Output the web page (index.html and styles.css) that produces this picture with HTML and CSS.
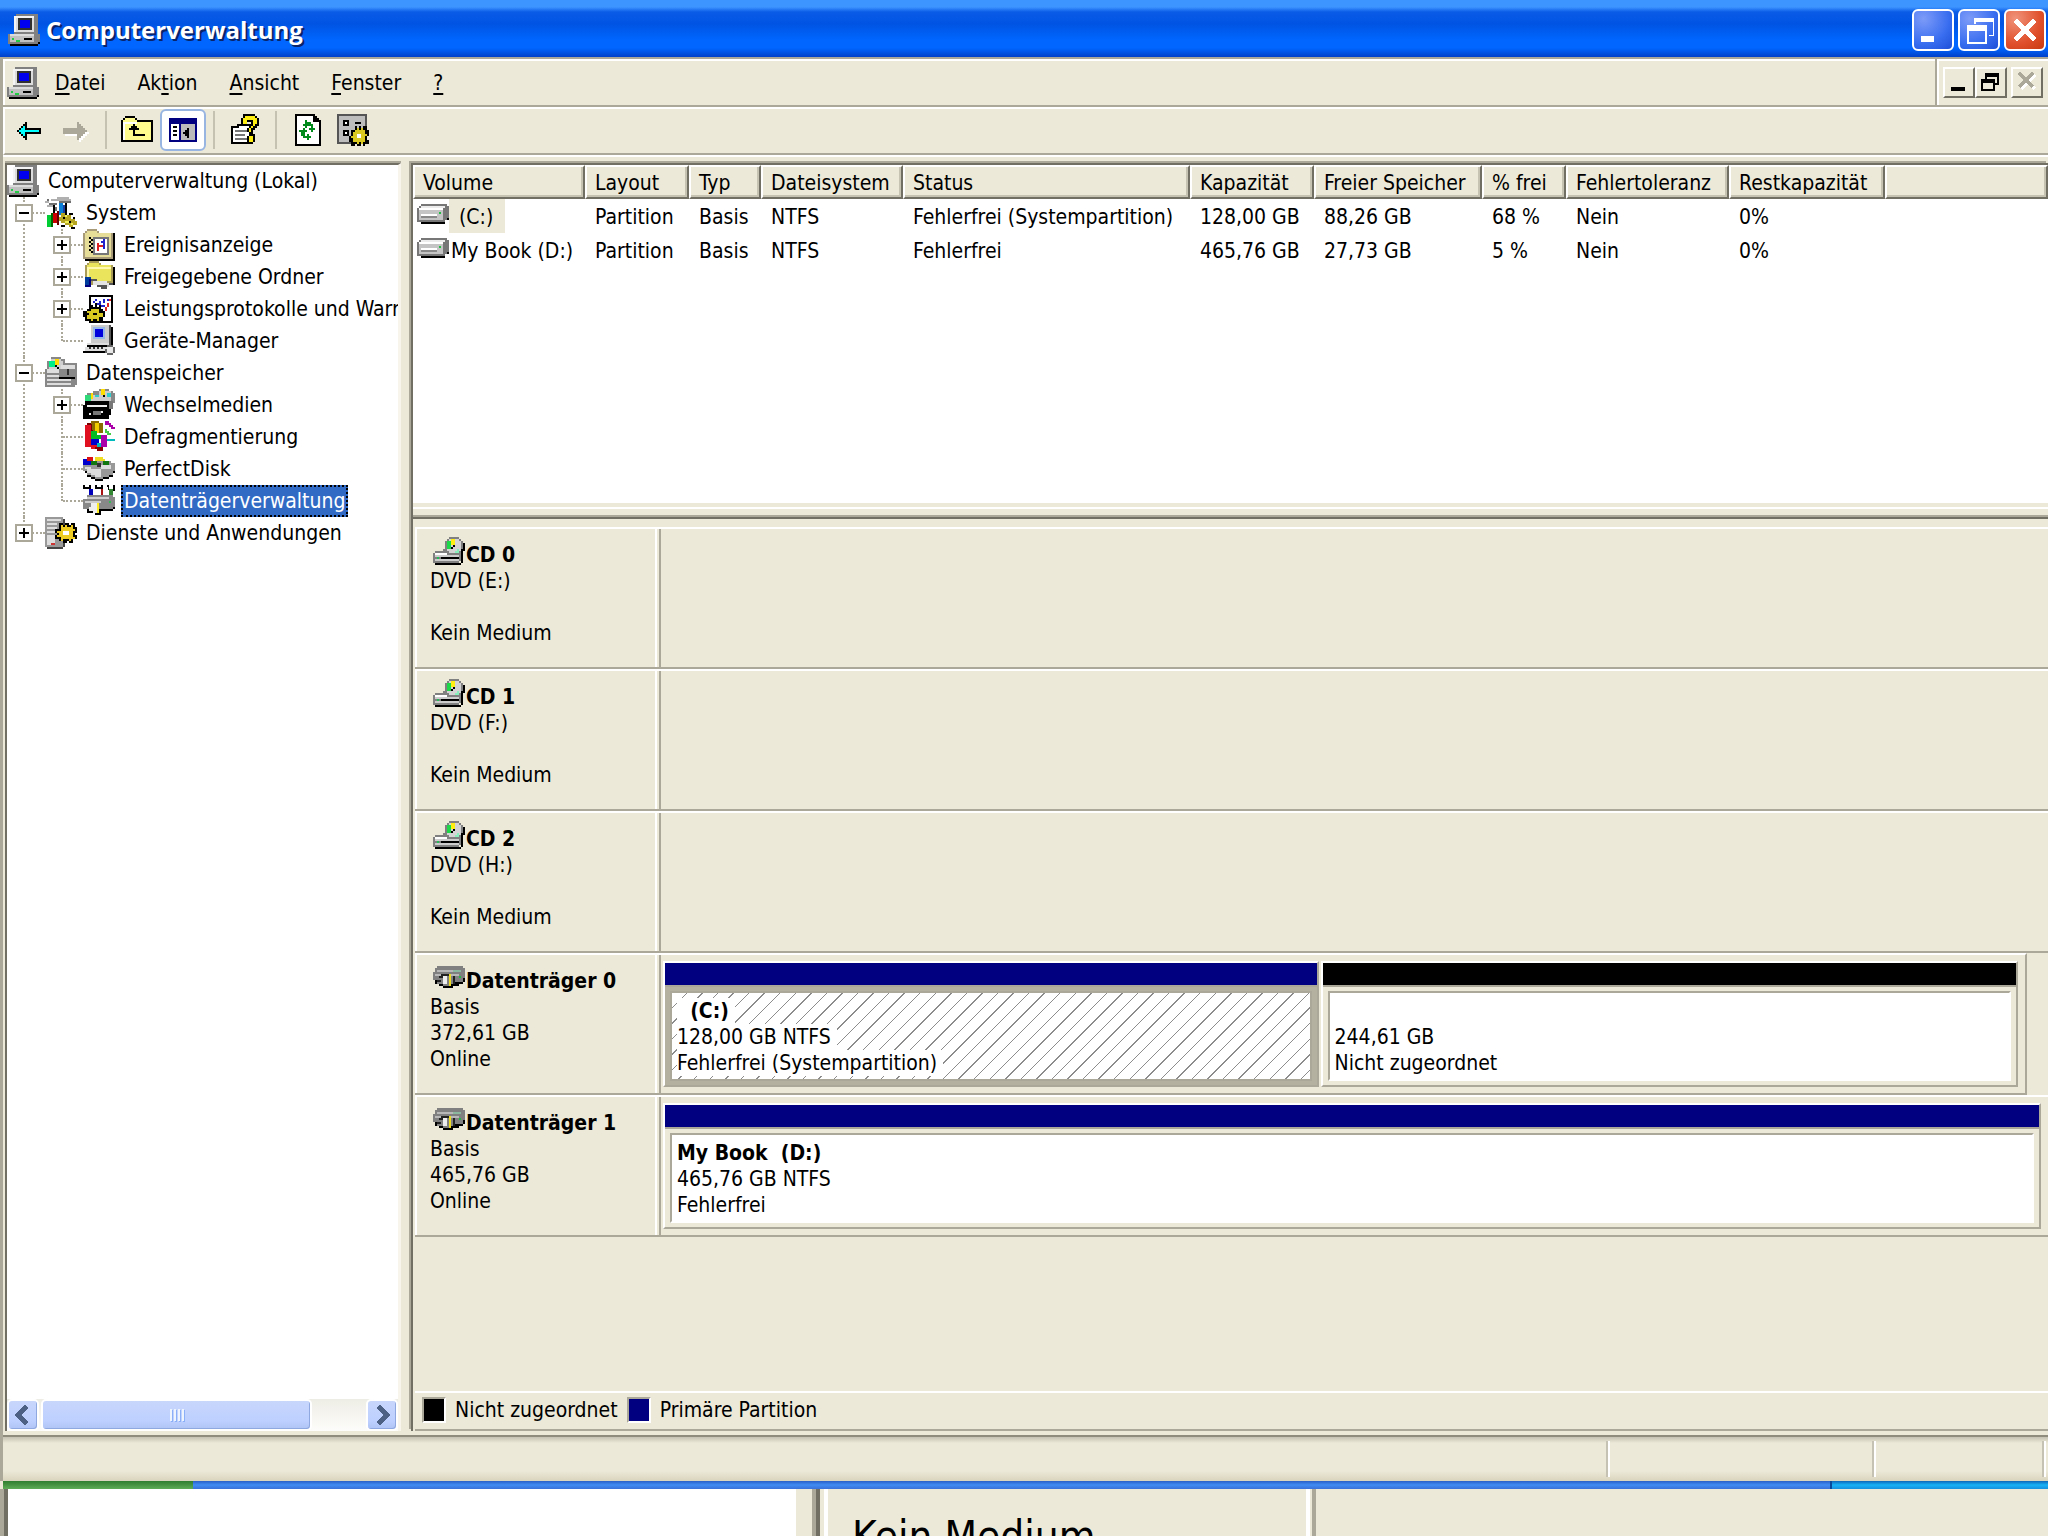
FILE: index.html
```
<!DOCTYPE html>
<html lang="de">
<head>
  <meta charset="UTF-8" />
  <meta name="viewport" content="width=device-width, initial-scale=1.0" />
  <title>Computerverwaltung</title>
  <link rel="stylesheet" href="styles.css">
</head>
<body>
  <!-- Icon sprite, every icon sits on a 16x16 grid -->
  <svg class="sprite" aria-hidden="true">
    <symbol id="computer" viewBox="0 0 16 16">
      <path fill="#000" d="M14 2h1v8h1v5h-1v1H1v-1h13z"/>
      <path fill="#808080" d="M4 0h11v10h1v4h-1v1H0v-5h3V1h1z"/>
      <path fill="#dcdcdc" d="M4 1h9v8H4zM1 10h12v1H1z"/>
      <path fill="#f4f4f4" d="M4 1h9v1H4zM3 1h1v8H3z"/>
      <path fill="#c0c0c0" d="M1 11h12v3H1z"/>
      <path fill="#303030" d="M5 2h7v6H5z"/>
      <path fill="#00e" d="M6 3h5v4H6z"/>
      <path fill="#000" d="M8 12h4v1H8z"/>
      <path fill="#2c4" d="M2 12h1v1H2zM4 13h2v1H4z"/>
    </symbol>
    <symbol id="plus" viewBox="0 0 9 9"><path d="M2 4h5v1H2zM4 2h1v5H4z"/></symbol>
    <symbol id="minus" viewBox="0 0 9 9"><path d="M2 4h5v1H2z"/></symbol>
    <symbol id="tools" viewBox="0 0 16 16">
      <path fill="#b0b0b0" d="M0 2h2v1H0zM3 1h2v1H3zM1 4h3v1H1zM6 0h6v1h1v2H7V2H5V1h1z"/>
      <path fill="#707070" d="M1 1h1v1H1zM2 3h4v1H2zM4 5h2v2H4zM7 2h6v1H7z"/>
      <path fill="#000" d="M4 4h1v5H4zM10 3h1v6h-1zM12 8h2v1h-2z"/>
      <path fill="#0a7fd8" d="M7 3h2v6H7z"/>
      <path fill="#1d3fa0" d="M9 4h1v5H9z"/>
      <path fill="#0c3" d="M1 9h2v6H1z"/>
      <path fill="#060" d="M3 8h1v7H3z"/>
      <path fill="#c00" d="M4 8h3v5H4z"/>
      <path fill="#600" d="M6 7h1v7H6z"/>
      <path fill="#b5a520" d="M8 8h2v1h3v2h2v1h1v2h-2v1h-2v-1h-2v-1H8v-1H7v-2h1z"/>
      <path fill="#000" d="M9 10h1v1H9zM12 12h1v1h-1zM8 14h2v1H8zM13 15h2v1h-2zM14 10h1v1h-1z"/>
      <path fill="#ee5" d="M10 9h1v1h-1zM10 12h2v1h-2zM13 13h1v1h-1z"/>
    </symbol>
    <symbol id="events" viewBox="0 0 16 16">
      <path fill="#000" d="M15 2h1v14H1v-1h14z"/>
      <path fill="#a89c78" d="M1 1h1V0h5v1h1v1h7v13H0V2h1z"/>
      <path fill="#e6de98" d="M2 1h5v1H2zM1 2h13v12H1z"/>
      <path fill="#000" d="M3 4h1v1H3zM4 5h1v1H4zM3 6h1v1H3zM4 7h1v1H4zM3 8h1v1H3zM4 9h1v1H4zM3 10h1v1H3zM4 11h1v1H4z"/>
      <path fill="#777" d="M5 4h8v9H5z"/>
      <path fill="#fff" d="M6 5h6v7H6z"/>
      <path fill="#d22" d="M7 7h1v4H7zM8 8h2v1H8z"/>
      <path fill="#22c" d="M10 5h1v5h-1zM9 6h1v1H9z"/>
    </symbol>
    <symbol id="shared" viewBox="0 0 16 16">
      <path fill="#000" d="M15 3h1v9h-1z"/>
      <path fill="#a89c58" d="M2 1h1V0h5v1h1v1h6v10H1V2h1z"/>
      <path fill="#eae45c" d="M3 1h5v1H3zM2 2h12v8H2z"/>
      <path fill="#fff9b0" d="M2 3h12v1H2zM2 3h1v7H2z"/>
      <path fill="#003c9c" d="M1 8h3v5H1z"/>
      <path fill="#000080" d="M1 12h3v1H1zM3 9h1v4H3z"/>
      <path fill="#e4e4e4" d="M5 10h7v1h3v1h-2v1H8v-1H5z"/>
      <path fill="#555" d="M4 9h3v1H4zM7 12h5v1H7zM9 13h3v1H9zM13 11h2v1h-2z"/>
    </symbol>
    <symbol id="perf" viewBox="0 0 16 16">
      <path fill="#000" d="M3 1h12v14H3z"/>
      <path fill="#fff" d="M4 2h10v12H4z"/>
      <path fill="#22c" d="M5 4h1v1H5zM6 3h1v1H6zM7 5h1v1H7zM8 4h1v2H8zM10 3h1v2h-1zM12 3h1v1h-1zM9 6h2v1H9z"/>
      <path fill="#d22" d="M13 3h1v1h-1zM12 5h1v2h-1zM11 7h1v2h-1zM10 9h1v1h-1z"/>
      <path fill="#000" d="M4 6h1v1h1V5h1v2h1V6h1v2h1v1h1v3h-1v2H9v1H7v-1H5v1H3v-1H1v-2H0V9h2V8h2z"/>
      <path fill="#d8c820" d="M4 8h4v2h2v2H8v2H7v-1H5v1H4v-1H2v-2h1v-1H2V9h2z"/>
      <path fill="#000" d="M5 10h2v1H5z"/>
    </symbol>
    <symbol id="device" viewBox="0 0 16 16">
      <path fill="#555" d="M4 0h10v10H4z"/>
      <path fill="#000" d="M14 1h1v9h-1zM0 13h12v1H0zM2 10h11v1H2z"/>
      <path fill="#ccc" d="M4 0h9v9H4z"/>
      <path fill="#98b8e8" d="M5 1h6v6H5z"/>
      <path fill="#00d" d="M6 2h4v4H6z"/>
      <path fill="#ddd" d="M2 9h11v1H2zM1 11h11v2H1z"/>
      <path fill="#333" d="M3 11h1v1H3zM5 11h1v1H5zM7 11h1v1H7zM9 11h1v1H9z"/>
      <path fill="#666" d="M12 10h3v1h1v3h-1v1h-3v-1h-1v-2h1z"/>
      <path fill="#e8e8e8" d="M12 11h3v3h-3z"/>
    </symbol>
    <symbol id="storage" viewBox="0 0 16 16">
      <path fill="#000" d="M2 15h13v-1h1V4h-1z"/>
      <path fill="#888" d="M3 0h5v1h2v2h6v11h-1v1H0V6h1V2h2z"/>
      <path fill="#cfcfcf" d="M3 1h5v1h1v4H2V2h1z"/>
      <path fill="#0e8" d="M2 2h3v3H2z"/>
      <path fill="#fd0" d="M5 1h2v3H5z"/>
      <path fill="#000" d="M5 4h1v1H5zM6 5h1v1H6zM7 10h8v1H7z"/>
      <path fill="#ddd" d="M1 6h6v2H1zM8 4h7v2H8zM1 9h6v1H1zM1 11h12v1H1zM1 13h12v1H1z"/>
      <path fill="#333" d="M11 6h1v3h-1z"/>
    </symbol>
    <symbol id="removable" viewBox="0 0 16 16">
      <path fill="#888" d="M2 2h3V1h3V0h5v1h2v1h1v5h-2v2H1V3h1z"/>
      <path fill="#ccc" d="M3 3h5v3H3zM8 1h6v5H8z"/>
      <path fill="#2fd97a" d="M1 3h3v4H1z"/>
      <path fill="#fd0" d="M4 2h1v3H4zM9 0h2v3H9z"/>
      <path fill="#3cc" d="M6 3h2v1H6zM12 2h2v2h-2z"/>
      <path fill="#000" d="M1 6h13v7h-1v2H0V8h1zM10 3h1v1h-1z"/>
      <path fill="#eee" d="M2 8h10v1H2zM3 12h1v1H3zM9 11h1v1H9z"/>
      <path fill="#777" d="M5 11h4v2H5zM13 6h2v4h-2z"/>
    </symbol>
    <symbol id="defrag" viewBox="0 0 16 16">
      <path fill="#700" d="M2 1h3v12h3v1H4v-1H1V2h1z"/>
      <path fill="#e01020" d="M1 2h3v10h3v2H4v-1H1z"/>
      <path fill="#886a00" d="M4 0h4v1h2v5H5z"/>
      <path fill="#ec0" d="M6 1h2v5H6z"/>
      <path fill="#0b2" d="M4 5h3v2h2v2H4z"/>
      <path fill="#00c" d="M4 9h4v3H4z"/>
      <path fill="#a0a" d="M9 7h3v6H9zM11 0h2v1h1v1h1v1h1v1h-2V3h-1V2h-2z"/>
      <path fill="#4c4" d="M11 4h1v1h1v1h1v1h-2V6h-1z"/>
      <path fill="#0bb" d="M12 9h4v1h-4zM7 11h2v2H7z"/>
      <path fill="#800" d="M6 13h4v1H6zM7 14h3v1H7z"/>
    </symbol>
    <symbol id="perfect" viewBox="0 0 16 16">
      <path fill="#000" d="M1 8h15v2h-1v2h-2v1h-3v1H6v-1H4v-1H2v-2H1z"/>
      <path fill="#999" d="M0 5h2V4h12v1h2v4h-1v2h-2v1h-3v1H6v-1H4v-1H2V9H0z"/>
      <path fill="#ddd" d="M1 7h3v1h5v4H6v-1H4v-1H2V8H1zM9 6h5v2H9z"/>
      <path fill="#00c" d="M0 3h4v3H0z"/>
      <path fill="#d11" d="M2 2h3v2H2z"/>
      <path fill="#171" d="M4 4h3v2H4zM10 4h3v2h-3z"/>
      <path fill="#ed2" d="M6 2h4v1h1v1H6z"/>
      <path fill="#333" d="M7 5h2v2H7z"/>
    </symbol>
    <symbol id="diskmgmt" viewBox="0 0 16 16">
      <path fill="#000" d="M0 0h1v1h2V0h1v2H0zM6 0h1v1h2V0h1v2H6zM12 0h1v2h2V0h1v3h-3z"/>
      <path fill="#00b" d="M3 2h2v4H3z"/>
      <path fill="#a11" d="M9 2h1v4H9z"/>
      <path fill="#383" d="M13 2h2v4h-2z"/>
      <path fill="#000" d="M1 9h15v3h-1v1H9v2H6v-1H2v-2H1z"/>
      <path fill="#888" d="M2 5h13v1h1v5h-1v1H0V7h2z"/>
      <path fill="#ccc" d="M2 6h11v1H2zM1 8h8v1H1z"/>
      <path fill="#eee" d="M4 9h3v5H5v-1H3v-2h1z"/>
      <path fill="#fe2" d="M7 9h1v5H7z"/>
      <path fill="#3b5" d="M13 8h1v1h-1z"/>
    </symbol>
    <symbol id="services" viewBox="0 0 16 16">
      <path fill="#444" d="M9 1h1v14H1v1h8z"/>
      <path fill="#999" d="M0 0h9v15H0z"/>
      <path fill="#ddd" d="M1 1h7v1H1zM1 3h5v1H1zM1 5h5v1H1zM1 7h4v1H1zM1 9h4v5H1z"/>
      <path fill="#c33" d="M3 13h2v1H3z"/>
      <path fill="#000" d="M7 3h2v1h1V3h2v1h1V3h2v2h1v3h-1v1h1v2h-2v2h-2v-1h-1v1H9v-1H7v-1H5V9h1V8H5V6h2z"/>
      <path fill="#ec2" d="M8 4h1v1h1V4h1v1h2V4h1v2h1v1h-1v3h1v1h-2v1h-1v-1H9v1H8v-2H6V9h1V8H6V7h2z"/>
      <path fill="#fff" d="M9 7h3v2H9z"/>
    </symbol>
    <symbol id="drive" viewBox="0 0 16 10">
      <path fill="#000" d="M15 1h1v7h-1v1H2v1h12V9h1z"/>
      <path fill="#777" d="M2 0h13v1h1v6h-1v1h-1v1H0V2h1V1h1z"/>
      <path fill="#ececec" d="M2 1h12v1H2z"/>
      <path fill="#c4c4c4" d="M1 2h12v6H1z"/>
      <path fill="#fff" d="M1 2h12v1H1zM2 5h8v1H2z"/>
      <path fill="#888" d="M2 6h8v1H2z"/>
      <path fill="#2b4" d="M11 4h1v1h-1z"/>
    </symbol>
    <symbol id="cd" viewBox="0 0 16 14">
      <path fill="#000" d="M14 2h1v1h1v4h-1v6h-1v1H1v-1h13z"/>
      <path fill="#808080" d="M8 0h5v1h1v1h1v4h-1v6h-1v1H0V8h1V7h4V6h1V2h1V1h1z"/>
      <path fill="#d4d4d4" d="M8 1h5v1h1v5h-1v1H8V7H7V2h1z"/>
      <path fill="#1fd84a" d="M7 2h2v4H7z"/>
      <path fill="#fe1" d="M9 1h2v3H9z"/>
      <path fill="#8eb" d="M12 6h1v2h-1zM11 7h1v1h-1z"/>
      <path fill="#000" d="M10 4h1v1h-1zM9 5h1v1H9zM4 10h9v1H4z"/>
      <path fill="#fff" d="M1 8h6v1H1z"/>
      <path fill="#ccc" d="M1 9h12v1H1zM1 11h12v1H1z"/>
      <path fill="#2b5" d="M2 10h1v1H2z"/>
    </symbol>
    <symbol id="disk" viewBox="0 0 16 11">
      <path fill="#000" d="M15 1h1v7h-1v1h-2v1h-3v1H5v-1H3V9H1V7h14z"/>
      <path fill="#808080" d="M2 0h13v1h1v5h-1v2h-4v1H8v1H5V9H2V7H0V3h1V1h1z"/>
      <path fill="#b8b8b8" d="M2 2h11v1H2zM1 4h12v1H1z"/>
      <path fill="#8cb8a0" d="M10 2h4v1h-4z"/>
      <path fill="#222" d="M4 4h4v1H5v1H3V5h1zM10 5h1v4h-1zM2 7h2v1H2z"/>
      <path fill="#eee" d="M5 5h2v4H5z"/>
      <path fill="#ed2" d="M8 4h1v6H8z"/>
      <path fill="#2b4" d="M13 5h1v1h-1z"/>
    </symbol>
    <symbol id="back" viewBox="0 0 16 16">
      <path fill="#000" d="M2 8h1V7h1V6h1V5h1V4h1v3h7v3H7v3H6v-1H5v-1H4v-1H3V9H2z"/>
      <path fill="#0ff" d="M3 8h1V7h1V6h1v2h7v1H6v2H5v-1H4V9H3z"/>
    </symbol>
    <symbol id="forward" viewBox="0 0 16 16">
      <path fill="#fff" d="M3 8h7V5h1v1h1v1h1v1h1v1h1v1h-1v1h-1v1h-1v1h-1v1h-1v-3H3z"/>
      <path fill="#aca899" d="M2 7h7V4h1v1h1v1h1v1h1v1h1v1h-1v1h-1v1h-1v1h-1v1H9v-3H2z"/>
    </symbol>
    <symbol id="up" viewBox="0 0 16 16">
      <path fill="#000" d="M0 3h1V2h1V1h5v1h1v1h8v11H0z"/>
      <path fill="#fffb8c" d="M1 3h1V2h5v1h1v1h7v9H1z"/>
      <path fill="#fff" d="M1 4h7v1H1zM1 4h1v9H1z"/>
      <path fill="#000" d="M6 5h1v1h1v1h1v1H7v2h5v1H6V8H4V7h1V6h1z"/>
    </symbol>
    <symbol id="panes" viewBox="0 0 16 16">
      <path fill="#000080" d="M1 2h14v12H1z"/>
      <path fill="#fff" d="M2 5h4v8H2z"/>
      <path fill="#bbb" d="M7 5h7v8H7z"/>
      <path fill="#000" d="M3 6h2v1H3zM3 8h2v1H3zM3 10h2v1H3zM8 9h1V8h1V7h1v5h-1v-1H9v-1H8z"/>
    </symbol>
    <symbol id="help" viewBox="0 0 16 16">
      <path fill="#000" d="M1 6h3V5h7v10H1z"/>
      <path fill="#fff" d="M2 7h3V6h5v8H2z"/>
      <path fill="#777" d="M3 8h6v1H3zM3 10h5v1H3zM3 12h6v1H3z"/>
      <path fill="#000" d="M7 0h6v1h1v1h1v4h-1v1h-1v1h-1v2h1v4h-1v1H9v-4h1V9H9V7h1V6h1V4H9v2H6V2h1z"/>
      <path fill="#fe1" d="M8 1h5v1h1v3h-1v1h-1v1h-1v2h-1V7h1V6h1V3H9v2H7V2h1zM10 11h2v3h-2z"/>
    </symbol>
    <symbol id="refresh" viewBox="0 0 16 16">
      <path fill="#000" d="M2 0h10v1h1v1h1v1h1v13H2z"/>
      <path fill="#fff" d="M3 1h8v3h3v11H3z"/>
      <path fill="#000" d="M11 1h1v2h2v1h-3z"/>
      <path fill="#008a1c" d="M7 3h1v1h2v1h1v2h1v1h-1v1h-1V8H9V7h1V6H8v1H7V6H6V5h1zM6 7h1v1h1v1H7v2h1v-1h1v1h1v1H9v1H8v-1H6v-1H5V9H4V8h2z"/>
    </symbol>
    <symbol id="settings" viewBox="0 0 16 16">
      <path fill="#555" d="M0 0h15v15H0z"/>
      <path fill="#bdbdbd" d="M1 1h13v13H1z"/>
      <path fill="#000" d="M3 3h3v3H3zM3 8h3v3H3zM9 4h3v1H9z"/>
      <path fill="#fff" d="M4 4h1v1H4zM4 9h1v1H4z"/>
      <path fill="#000" d="M9 6h1v1h1V6h1v1h1V6h2v2h1v3h-1v2h1v2h-2v1h-1v-1h-1v1h-2v-1H9v1H7v-2H6v-3h1V8h2z"/>
      <path fill="#d8c820" d="M9 8h1V7h1v1h1V7h1v1h1v2h1v1h-1v3h-1v1h-1v-1h-1v1h-1v-1H8v-2H7v-1h1V9h1z"/>
      <path fill="#fff" d="M10 10h2v2h-2z"/>
    </symbol>
  </svg>

  <div class="window">
    <header class="titlebar">
      <svg class="icon"><use href="#computer"/></svg>
      <h1>Computerverwaltung</h1>
      <div class="window-buttons">
        <button aria-label="Minimieren"><svg viewBox="0 0 21 21"><path fill="#fff" d="M4 14h7v3H4z"/></svg></button>
        <button aria-label="Verkleinern"><svg viewBox="0 0 21 21"><path fill="#fff" d="M8 4h11v10h-3v-1h2V6H9v1H8zM4 8h11v10H4zM5 11v6h9v-6z" fill-rule="evenodd"/></svg></button>
        <button class="close" aria-label="Schließen"><svg viewBox="0 0 21 21"><path stroke="#fff" stroke-width="3" d="M5 5l11 11M16 5L5 16"/></svg></button>
      </div>
    </header>

    <div class="menubar">
      <nav>
        <svg class="icon"><use href="#computer"/></svg>
        <button><u>D</u>atei</button>
        <button>Ak<u>t</u>ion</button>
        <button><u>A</u>nsicht</button>
        <button><u>F</u>enster</button>
        <button><u>?</u></button>
      </nav>
      <div class="mdi-buttons">
        <button aria-label="Fenster minimieren"><svg viewBox="0 0 16 16"><path d="M3 10h7v2H3z"/></svg></button>
        <button aria-label="Fenster verkleinern"><svg viewBox="0 0 16 16"><path d="M4 3h7v6H9V8h1V5H5v1H4zM2 6h7v6H2zM3 8v3h5V8z" fill-rule="evenodd"/></svg></button>
        <button class="mdi-close" aria-label="Fenster schließen" disabled><svg viewBox="0 0 16 16"><path stroke="#fff" stroke-width="2" d="M4 4l7 7M11 4l-7 7"/><path stroke="#aca899" stroke-width="2" d="M3 3l7 7M10 3l-7 7"/></svg></button>
      </div>
    </div>

    <div class="toolbar">
      <button aria-label="Zurück"><svg class="icon"><use href="#back"/></svg></button>
      <button aria-label="Vorwärts" disabled><svg class="icon"><use href="#forward"/></svg></button>
      <span class="separator"></span>
      <button aria-label="Aufwärts"><svg class="icon"><use href="#up"/></svg></button>
      <button class="pressed" aria-label="Konsolenstruktur"><svg class="icon"><use href="#panes"/></svg></button>
      <span class="separator"></span>
      <button aria-label="Hilfe"><svg class="icon"><use href="#help"/></svg></button>
      <span class="separator"></span>
      <button aria-label="Aktualisieren"><svg class="icon"><use href="#refresh"/></svg></button>
      <button aria-label="Einstellungen"><svg class="icon"><use href="#settings"/></svg></button>
    </div>

    <div class="workspace">
      <aside class="sidebar">
        <div class="tree">
          <div class="row root"><svg class="icon"><use href="#computer"/></svg><span class="label">Computerverwaltung (Lokal)</span></div>
          <ul>
            <li>
              <div class="row"><button class="expander" aria-label="Zuklappen"><svg><use href="#minus"/></svg></button><svg class="icon"><use href="#tools"/></svg><span class="label">System</span></div>
              <ul>
                <li><div class="row"><button class="expander" aria-label="Aufklappen"><svg><use href="#plus"/></svg></button><svg class="icon"><use href="#events"/></svg><span class="label">Ereignisanzeige</span></div></li>
                <li><div class="row"><button class="expander" aria-label="Aufklappen"><svg><use href="#plus"/></svg></button><svg class="icon"><use href="#shared"/></svg><span class="label">Freigegebene Ordner</span></div></li>
                <li><div class="row"><button class="expander" aria-label="Aufklappen"><svg><use href="#plus"/></svg></button><svg class="icon"><use href="#perf"/></svg><span class="label">Leistungsprotokolle und Warnungen</span></div></li>
                <li><div class="row"><svg class="icon"><use href="#device"/></svg><span class="label">Geräte-Manager</span></div></li>
              </ul>
            </li>
            <li>
              <div class="row"><button class="expander" aria-label="Zuklappen"><svg><use href="#minus"/></svg></button><svg class="icon"><use href="#storage"/></svg><span class="label">Datenspeicher</span></div>
              <ul>
                <li><div class="row"><button class="expander" aria-label="Aufklappen"><svg><use href="#plus"/></svg></button><svg class="icon"><use href="#removable"/></svg><span class="label">Wechselmedien</span></div></li>
                <li><div class="row"><svg class="icon"><use href="#defrag"/></svg><span class="label">Defragmentierung</span></div></li>
                <li><div class="row"><svg class="icon"><use href="#perfect"/></svg><span class="label">PerfectDisk</span></div></li>
                <li><div class="row"><svg class="icon"><use href="#diskmgmt"/></svg><span class="label selected">Datenträgerverwaltung</span></div></li>
              </ul>
            </li>
            <li>
              <div class="row"><button class="expander" aria-label="Aufklappen"><svg><use href="#plus"/></svg></button><svg class="icon"><use href="#services"/></svg><span class="label">Dienste und Anwendungen</span></div>
            </li>
          </ul>
        </div>
        <div class="scrollbar">
          <button aria-label="Nach links"><svg viewBox="0 0 16 16"><path d="M10 3L5 8l5 5"/></svg></button>
          <div class="track"><div class="thumb"><i></i><i></i><i></i><i></i></div></div>
          <button aria-label="Nach rechts"><svg viewBox="0 0 16 16"><path d="M6 3l5 5-5 5"/></svg></button>
        </div>
      </aside>

      <main class="content">
        <div class="volumes">
          <table>
            <colgroup>
              <col class="c-volume"><col class="c-layout"><col class="c-type"><col class="c-fs"><col class="c-status"><col class="c-capacity"><col class="c-free"><col class="c-percent"><col class="c-fault"><col class="c-rest"><col>
            </colgroup>
            <thead>
              <tr><th>Volume</th><th>Layout</th><th>Typ</th><th>Dateisystem</th><th>Status</th><th>Kapazität</th><th>Freier Speicher</th><th>% frei</th><th>Fehlertoleranz</th><th>Restkapazität</th><th></th></tr>
            </thead>
            <tbody>
              <tr><td class="name"><div><svg class="drive"><use href="#drive"/></svg><span class="current">(C:)</span></div></td><td>Partition</td><td>Basis</td><td>NTFS</td><td>Fehlerfrei (Systempartition)</td><td>128,00 GB</td><td>88,26 GB</td><td>68 %</td><td>Nein</td><td>0%</td><td></td></tr>
              <tr><td class="name"><div><svg class="drive"><use href="#drive"/></svg><span>My Book (D:)</span></div></td><td>Partition</td><td>Basis</td><td>NTFS</td><td>Fehlerfrei</td><td>465,76 GB</td><td>27,73 GB</td><td>5 %</td><td>Nein</td><td>0%</td><td></td></tr>
            </tbody>
          </table>
        </div>
        <div class="splitter"></div>

        <div class="disks">
          <section class="disk">
            <div class="disk-info">
              <h2><svg class="cd"><use href="#cd"/></svg>CD 0</h2>
              <p>DVD (E:)</p>
              <p class="medium">Kein Medium</p>
            </div>
            <div class="partitions"></div>
          </section>
          <section class="disk">
            <div class="disk-info">
              <h2><svg class="cd"><use href="#cd"/></svg>CD 1</h2>
              <p>DVD (F:)</p>
              <p class="medium">Kein Medium</p>
            </div>
            <div class="partitions"></div>
          </section>
          <section class="disk">
            <div class="disk-info">
              <h2><svg class="cd"><use href="#cd"/></svg>CD 2</h2>
              <p>DVD (H:)</p>
              <p class="medium">Kein Medium</p>
            </div>
            <div class="partitions"></div>
          </section>
          <section class="disk smaller">
            <div class="disk-info">
              <h2><svg class="hdd"><use href="#disk"/></svg>Datenträger 0</h2>
              <p>Basis</p>
              <p>372,61 GB</p>
              <p>Online</p>
            </div>
            <div class="partitions">
              <div class="partition active" style="flex-grow: 654">
                <div class="bar primary"></div>
                <div class="body"><div class="inner">
                  <p><b>&nbsp;&nbsp;(C:)</b></p>
                  <p>128,00 GB NTFS</p>
                  <p>Fehlerfrei (Systempartition)</p>
                </div></div>
              </div>
              <div class="partition" style="flex-grow: 696">
                <div class="bar unallocated"></div>
                <div class="body"><div class="inner">
                  <p>&nbsp;</p>
                  <p>244,61 GB</p>
                  <p>Nicht zugeordnet</p>
                </div></div>
              </div>
            </div>
          </section>
          <section class="disk">
            <div class="disk-info">
              <h2><svg class="hdd"><use href="#disk"/></svg>Datenträger 1</h2>
              <p>Basis</p>
              <p>465,76 GB</p>
              <p>Online</p>
            </div>
            <div class="partitions">
              <div class="partition" style="flex-grow: 1">
                <div class="bar primary"></div>
                <div class="body"><div class="inner">
                  <p><b>My Book&nbsp; (D:)</b></p>
                  <p>465,76 GB NTFS</p>
                  <p>Fehlerfrei</p>
                </div></div>
              </div>
            </div>
          </section>
        </div>

        <div class="legend">
          <span class="swatch unallocated"></span>Nicht zugeordnet
          <span class="swatch primary"></span>Primäre Partition
        </div>
      </main>
    </div>

    <footer class="statusbar"><span></span><span></span><span></span></footer>
  </div>

  <div class="taskbar"><span class="start"></span><span class="tasks"></span><span class="tray"></span></div>

  <div class="backdrop">
    <div class="backdrop-tree"></div>
    <div class="backdrop-info">Kein Medium</div>
    <div class="backdrop-rest"></div>
  </div>
</body>
</html>
```
FILE: styles.css
```
* {
  box-sizing: border-box;
}
body {
  margin: 0;
  height: 100vh;
  display: flex;
  flex-direction: column;
  overflow: hidden;
  background: #ece9d8;
  color: #000;
  font-family: 'DejaVu Sans Condensed', Tahoma, 'DejaVu Sans', sans-serif;
  font-size: 21px;
  line-height: 26px;
}
h1, h2, p, ul {
  margin: 0;
  padding: 0;
}
button {
  margin: 0;
  padding: 0;
  border: none;
  background: none;
  color: inherit;
  font: inherit;
}
svg {
  display: block;
  flex: none;
  shape-rendering: crispEdges;
}
.sprite {
  position: absolute;
  width: 0;
  height: 0;
}
.icon {
  width: 32px;
  height: 32px;
}
.window {
  flex: 1;
  min-height: 0;
  display: flex;
  flex-direction: column;
  border-left: 3px solid #aca899;
}

/* Title bar */
.titlebar {
  display: flex;
  align-items: center;
  height: 57px;
  margin-left: -3px;
  padding: 2px 2px 0 8px;
  background: linear-gradient(#3d95ff 0, #3d95ff 7px, #0a5be6 12px, #0054e3 24px, #0066ff 40px, #0066ff 48px, #0040c8 57px);
}
.titlebar h1 {
  flex: 1;
  margin-left: 6px;
  color: #fff;
  font-family: 'Open Sans', 'Trebuchet MS', sans-serif;
  font-size: 24px;
  font-weight: bold;
  line-height: 36px;
  text-shadow: 2px 2px 0 #0a246a;
}
.window-buttons {
  display: flex;
  gap: 4px;
}
.window-buttons button {
  width: 42px;
  height: 42px;
  border: 2px solid #fff;
  border-radius: 6px;
  background: radial-gradient(circle at 25% 20%, #7d9bf8, #3a6ef0 60%, #1c4fd8);
}
.window-buttons .close {
  background: radial-gradient(circle at 25% 20%, #f0937a, #e0502c 60%, #c83a10);
}
.window-buttons svg {
  width: 38px;
  height: 38px;
}

/* Menu and toolbar */
.menubar {
  display: flex;
  height: 50px;
  border-top: 2px solid #aca899;
  border-bottom: 2px solid #aca899;
}
.menubar nav {
  flex: 1;
  display: flex;
  align-items: center;
  padding-left: 2px;
  border-top: 2px solid #fff;
  border-left: 2px solid #fff;
}
.menubar nav button {
  padding: 0 16px;
}
.menubar u {
  text-underline-offset: 3px;
  text-decoration-thickness: 2px;
}
.mdi-buttons {
  display: flex;
  align-items: center;
  padding: 0 5px 0 6px;
  border-left: 2px solid #aca899;
  box-shadow: inset 2px 2px #fff;
}
.mdi-buttons button {
  width: 32px;
  height: 31px;
  border: 2px solid;
  border-color: #fff #716f64 #716f64 #fff;
}
.mdi-buttons .mdi-close {
  margin-left: 4px;
}
.mdi-buttons svg {
  width: 32px;
  height: 32px;
  margin: -2px 0 0 0;
}
.toolbar {
  display: flex;
  align-items: center;
  height: 48px;
  padding: 0 0 2px 1px;
  border-top: 2px solid #fff;
  border-left: 2px solid #fff;
  border-bottom: 2px solid #aca899;
}
.toolbar button {
  display: flex;
  align-items: center;
  justify-content: center;
  width: 46px;
  height: 42px;
}
.toolbar .pressed {
  border: 2px solid #98b5e2;
  border-radius: 6px;
  background: #fff;
}
.separator {
  width: 2px;
  height: 38px;
  margin: 0 7px;
  background: #c5c2b2;
}

/* Console tree */
.workspace {
  flex: 1;
  min-height: 0;
  display: flex;
  gap: 10px;
  padding: 6px 0 4px 2px;
  border-top: 2px solid #fff;
}
.sidebar {
  display: flex;
  flex-direction: column;
  width: 396px;
  border-left: 2px solid #716f64;
  border-top: 2px solid #716f64;
  border-right: 3px solid #f8f6ec;
  box-shadow: 0 -2px #aca899;
  background: #fff;
}
.tree {
  flex: 1;
  min-height: 0;
  overflow: hidden;
}
.tree ul {
  list-style: none;
}
.tree ul ul {
  padding-left: 38px;
}
.tree li {
  position: relative;
}
.tree li::before {
  content: '';
  position: absolute;
  top: 0;
  bottom: 0;
  left: 16px;
  border-left: 2px dotted #aca899;
}
.tree li:last-child::before {
  bottom: auto;
  height: 16px;
}
.row {
  position: relative;
  display: flex;
  align-items: center;
  height: 32px;
  padding-left: 38px;
  white-space: nowrap;
}
.row.root {
  padding-left: 0;
}
.row:not(.root)::before {
  content: '';
  position: absolute;
  left: 18px;
  top: 15px;
  width: 20px;
  border-top: 2px dotted #aca899;
}
.expander {
  position: relative;
  width: 18px;
  height: 18px;
  margin: 0 12px 0 -30px;
  border: 2px solid #aca899;
  background: #fff;
}
.expander svg {
  width: 18px;
  height: 18px;
  margin: -2px;
}
.label {
  margin-left: 6px;
  padding: 0 3px;
  line-height: 32px;
}
.selected {
  background: #316ac5;
  color: #fff;
  outline: 2px dotted #000;
  outline-offset: -2px;
}
.scrollbar {
  display: flex;
  height: 32px;
  background: linear-gradient(#eeede5, #fdfdfb);
}
.scrollbar button,
.thumb {
  border: 2px solid #fff;
  border-radius: 5px;
  background: linear-gradient(#c8d6fb, #bdd0ff 70%, #b0c4f5);
  box-shadow: inset -1px -1px #8fa8e0;
}
.scrollbar button {
  width: 32px;
}
.scrollbar svg {
  width: 28px;
  height: 28px;
  fill: none;
  stroke: #4d6185;
  stroke-width: 3;
}
.track {
  flex: 1;
}
.thumb {
  display: flex;
  align-items: center;
  justify-content: center;
  gap: 2px;
  width: 83%;
  height: 32px;
  margin-left: 2px;
}
.thumb i {
  width: 2px;
  height: 12px;
  background: #eef4fe;
  box-shadow: 1px 1px #8cb0f8;
}

/* Volume list */
.content {
  flex: 1;
  min-width: 0;
  display: flex;
  flex-direction: column;
  border-left: 2px solid #716f64;
  border-top: 2px solid #716f64;
  box-shadow: -2px -2px #aca899;
}
.volumes {
  height: 22vh;
  overflow: hidden;
  background: #fff;
}
.volumes table {
  width: 100%;
  border-collapse: separate;
  border-spacing: 0;
  table-layout: fixed;
  white-space: nowrap;
}
.c-volume { width: 172px; }
.c-layout { width: 104px; }
.c-type { width: 72px; }
.c-fs { width: 142px; }
.c-status { width: 287px; }
.c-capacity { width: 124px; }
.c-free { width: 168px; }
.c-percent { width: 84px; }
.c-fault { width: 163px; }
.c-rest { width: 156px; }
.volumes th {
  height: 34px;
  padding: 2px 0 0 8px;
  border: 2px solid;
  border-color: #fff #716f64 #716f64 #fff;
  box-shadow: inset -2px -2px #c6c3b3;
  background: #ece9d8;
  font-weight: normal;
  text-align: left;
}
.volumes td {
  height: 34px;
  padding: 2px 0 0 10px;
}
.volumes td.name {
  padding: 0 0 0 4px;
}
.name div {
  display: flex;
  align-items: center;
  height: 34px;
}
.drive {
  width: 32px;
  height: 20px;
  margin-bottom: 5px;
}
.name span {
  padding: 2px 2px 0;
  line-height: 32px;
}
.name .current {
  padding: 2px 12px 0 10px;
  background: #ece9d8;
}
.splitter {
  height: 16px;
  border-top: 4px solid #ece9d8;
  border-bottom: 2px solid #716f64;
  box-shadow: inset 0 2px #fff, inset 0 -2px #aca899;
}

/* Disk view */
.disks {
  flex: 1;
  min-height: 0;
  padding: 8px 0 0 2px;
}
.disk {
  display: grid;
  grid-template-columns: 242px 1fr;
  gap: 2px;
  height: 142px;
  border-top: 2px solid #fff;
  border-bottom: 2px solid #aca899;
}
.disk.smaller {
  margin-right: 21px;
  border-right: 2px solid #aca899;
}
.disk-info {
  padding: 13px 0 0 13px;
  border-left: 2px solid #fff;
  border-right: 2px solid #fff;
}
.disk-info h2 {
  display: flex;
  align-items: center;
  font-size: 21px;
  line-height: 26px;
}
.medium {
  margin-top: 26px;
}
.cd,
.hdd {
  width: 32px;
  height: 28px;
  margin: -8px 1px 0 3px;
}
.hdd {
  height: 22px;
}
.partitions {
  display: flex;
  gap: 2px;
  padding: 6px 7px 6px 2px;
  border-left: 2px solid #aca899;
}
.partition {
  flex: 1 1 0;
  display: flex;
  flex-direction: column;
  border: 2px solid;
  border-color: #fff #aca899 #aca899 #fff;
}
.bar {
  height: 24px;
  border-bottom: 2px solid #aca899;
}
.primary {
  background: #000080;
}
.unallocated {
  background: #000;
}
.body {
  flex: 1;
  display: flex;
  padding: 4px 5px;
}
.inner {
  flex: 1;
  padding: 5px 0 0 5px;
  border: 2px solid;
  border-color: #aca899 #fff #fff #aca899;
  background: #fff;
}
.inner p {
  width: fit-content;
  padding-right: 6px;
  background: #fff;
}
.active .body {
  background: #b5b1a1;
}
.active .inner {
  border-color: #aca899;
  background: repeating-linear-gradient(135deg, #fff 0, #fff 10px, #8c8c8c 10px, #8c8c8c 11px);
}
.legend {
  display: flex;
  align-items: center;
  height: 40px;
  margin-left: 2px;
  padding: 0 0 2px 7px;
  border-top: 2px solid #fff;
  border-bottom: 2px solid #aca899;
}
.swatch {
  width: 24px;
  height: 26px;
  margin-right: 9px;
  border: 2px solid;
  border-color: #aca899 #fff #fff #aca899;
}
.legend .swatch + .swatch {
  margin-left: 9px;
}

/* Status bar and everything below the window */
.statusbar {
  display: grid;
  grid-template-columns: 1fr 266px 170px;
  height: 46px;
  padding: 4px 2px;
  border-top: 2px solid #8f8c7e;
  background: linear-gradient(#c5c2b3, #ece9d8 6px, #ece9d8 34px, #d9d4bd);
}
.statusbar span {
  border-right: 2px solid #fff;
  box-shadow: inset -2px 0 #c5c2b3;
}
.taskbar {
  display: flex;
  height: 8px;
  margin-left: 3px;
}
.start {
  width: 190px;
  background: linear-gradient(#2f7d2f, #5eac56);
}
.tasks {
  flex: 1;
  background: linear-gradient(#2a5fc8, #3f8cf3 4px, #3a70d8);
}
.tray {
  width: 218px;
  border-left: 2px solid #0a4a9c;
  background: linear-gradient(#0d66b8, #18b2f6 4px, #1690e0);
}
.backdrop {
  display: grid;
  grid-template-columns: 800px 510px 1fr;
  height: 47px;
  overflow: hidden;
}
.backdrop-tree {
  margin-right: 4px;
  border-left: 4px solid #aca899;
  box-shadow: inset 4px 0 #716f64;
  background: #fff;
}
.backdrop-info {
  margin-left: 12px;
  padding: 22px 0 0 36px;
  border-left: 4px solid #aca899;
  border-right: 4px solid #fff;
  box-shadow: inset 4px 0 #716f64, inset 8px 0 #ece9d8, inset 12px 0 #fff;
  font-size: 42px;
  line-height: 52px;
  white-space: nowrap;
}
.backdrop-rest {
  margin-left: 2px;
  border-left: 4px solid #aca899;
}
```
